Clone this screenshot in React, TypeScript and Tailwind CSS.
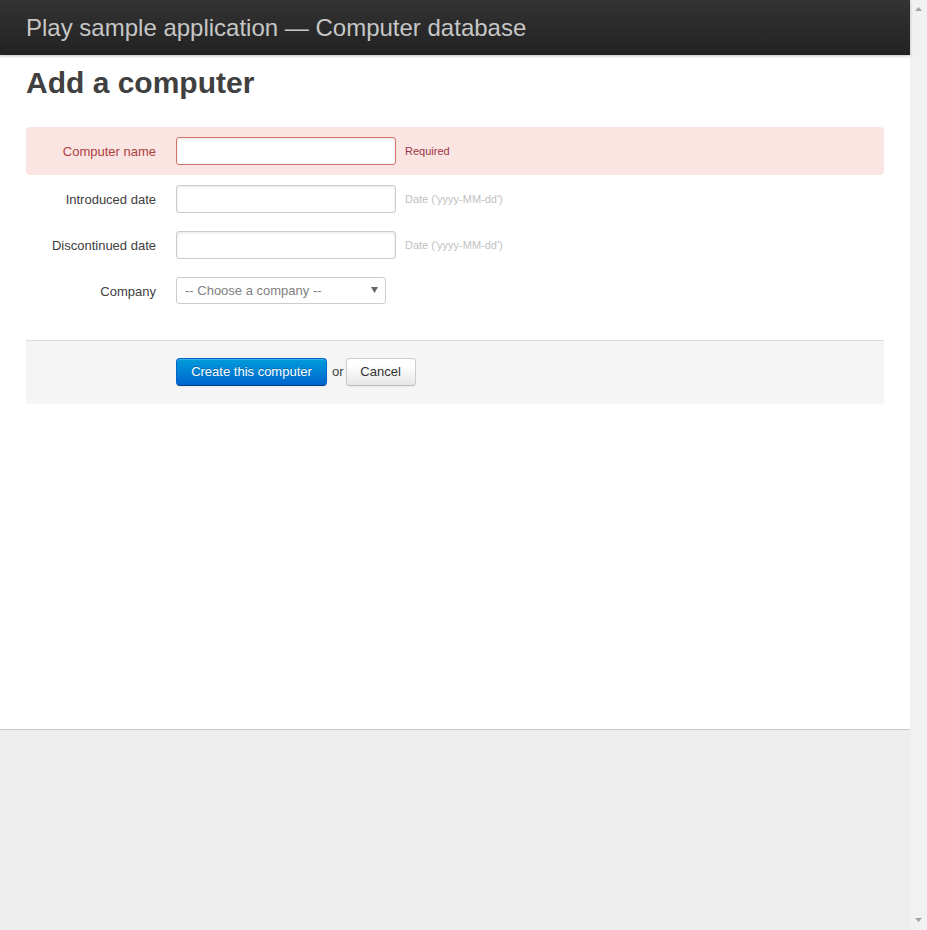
import React from "react";

const font = { fontFamily: '"Liberation Sans", Arial, Helvetica, sans-serif' };

function Field({
  label,
  error,
  help,
}: {
  label: string;
  error?: boolean;
  help: string;
}) {
  return (
    <div className="flex items-center">
      <label
        className={`w-[130px] pt-[2px] text-right text-[13px] leading-[18px] ${
          error ? "text-[#b0403e]" : "text-[#404040]"
        }`}
      >
        {label}
      </label>
      <input
        type="text"
        className={`ml-[20px] h-[28px] w-[220px] rounded-[3px] border bg-white px-[6px] text-[13px] outline-none shadow-[inset_0_1px_3px_rgba(0,0,0,0.1)] ${
          error ? "border-[#d3716b]" : "border-[#cccccc]"
        }`}
      />
      <span
        className={`ml-[9px] text-[11px] leading-[18px] ${
          error ? "text-[#9c3444]" : "text-[#bfbfbf]"
        }`}
      >
        {help}
      </span>
    </div>
  );
}

export default function App() {
  return (
    <div className="flex h-[930px] w-full overflow-hidden" style={font}>
      <div className="flex min-w-0 flex-1 flex-col">
        <header className="relative z-10 flex h-[55px] shrink-0 items-center bg-gradient-to-b from-[#333333] to-[#222222] pl-[26px] shadow-[0_1px_3px_rgba(0,0,0,0.25)]">
          <h1 className="text-[24px] leading-[28px] font-normal text-[#c6c6c6]">
            Play sample application — Computer database
          </h1>
        </header>
        <section className="h-[675px] shrink-0 border-b border-[#c8c8c8] bg-white px-[26px] pt-[10px]">
          <h2 className="text-[30px] leading-[36px] font-bold text-[#404040]">
            Add a computer
          </h2>
          <form className="mt-[26px]">
            <div className="rounded-[4px] bg-[#fae5e3] py-[10px]">
              <Field label="Computer name" error help="Required" />
            </div>
            <div className="mt-[10px]">
              <Field label="Introduced date" help="Date ('yyyy-MM-dd')" />
            </div>
            <div className="mt-[18px]">
              <Field label="Discontinued date" help="Date ('yyyy-MM-dd')" />
            </div>
            <div className="mt-[18px] flex items-center">
              <label className="w-[130px] pt-[2px] text-right text-[13px] leading-[18px] text-[#404040]">
                Company
              </label>
              <div className="relative ml-[20px] h-[27px] w-[210px]">
                <select
                  className="h-[27px] w-[210px] appearance-none rounded-[3px] border border-[#cccccc] bg-white pl-[8px] text-[13px] text-[#808080] outline-none"
                  defaultValue=""
                >
                  <option value="">-- Choose a company --</option>
                </select>
                <svg
                  className="pointer-events-none absolute right-[8px] top-[10px]"
                  width="7"
                  height="6"
                  viewBox="0 0 7 6"
                >
                  <polygon points="0,0 7,0 3.5,6" fill="#666666" />
                </svg>
              </div>
            </div>
            <div className="mt-[36px] flex items-center rounded-b-[3px] border-t border-[#dddddd] bg-[#f5f5f5] pb-[18px] pl-[150px] pt-[17px]">
              <button
                type="button"
                className="h-[28px] w-[151px] rounded-[4px] border border-[#0064cd] border-b-[#003f81] bg-gradient-to-b from-[#049cdb] to-[#0064cd] text-[13px] leading-[18px] text-white [text-shadow:0_-1px_0_rgba(0,0,0,0.25)] shadow-[inset_0_1px_0_rgba(255,255,255,0.2),0_1px_2px_rgba(0,0,0,0.05)]"
              >
                Create this computer
              </button>
              <span className="ml-[5px] mr-[2px] text-[13px] leading-[18px] text-[#404040]">
                or
              </span>
              <button
                type="button"
                className="h-[28px] w-[70px] rounded-[4px] border border-[#cccccc] border-b-[#bbbbbb] bg-gradient-to-b from-white from-25% to-[#e6e6e6] text-[13px] leading-[18px] text-[#333333] shadow-[inset_0_1px_0_rgba(255,255,255,0.2),0_1px_2px_rgba(0,0,0,0.05)]"
              >
                Cancel
              </button>
            </div>
          </form>
        </section>
        <div className="flex-1 bg-[#eeeeee]" />
      </div>
      <div className="flex w-[17px] shrink-0 flex-col items-center justify-between bg-[#f1f1f1] pb-[8px] pt-[7px]">
        <svg width="7" height="4" viewBox="0 0 7 4">
          <polygon points="3.5,0 7,4 0,4" fill="#a3a3a3" />
        </svg>
        <svg width="7" height="4" viewBox="0 0 7 4">
          <polygon points="0,0 7,0 3.5,4" fill="#a3a3a3" />
        </svg>
      </div>
    </div>
  );
}
